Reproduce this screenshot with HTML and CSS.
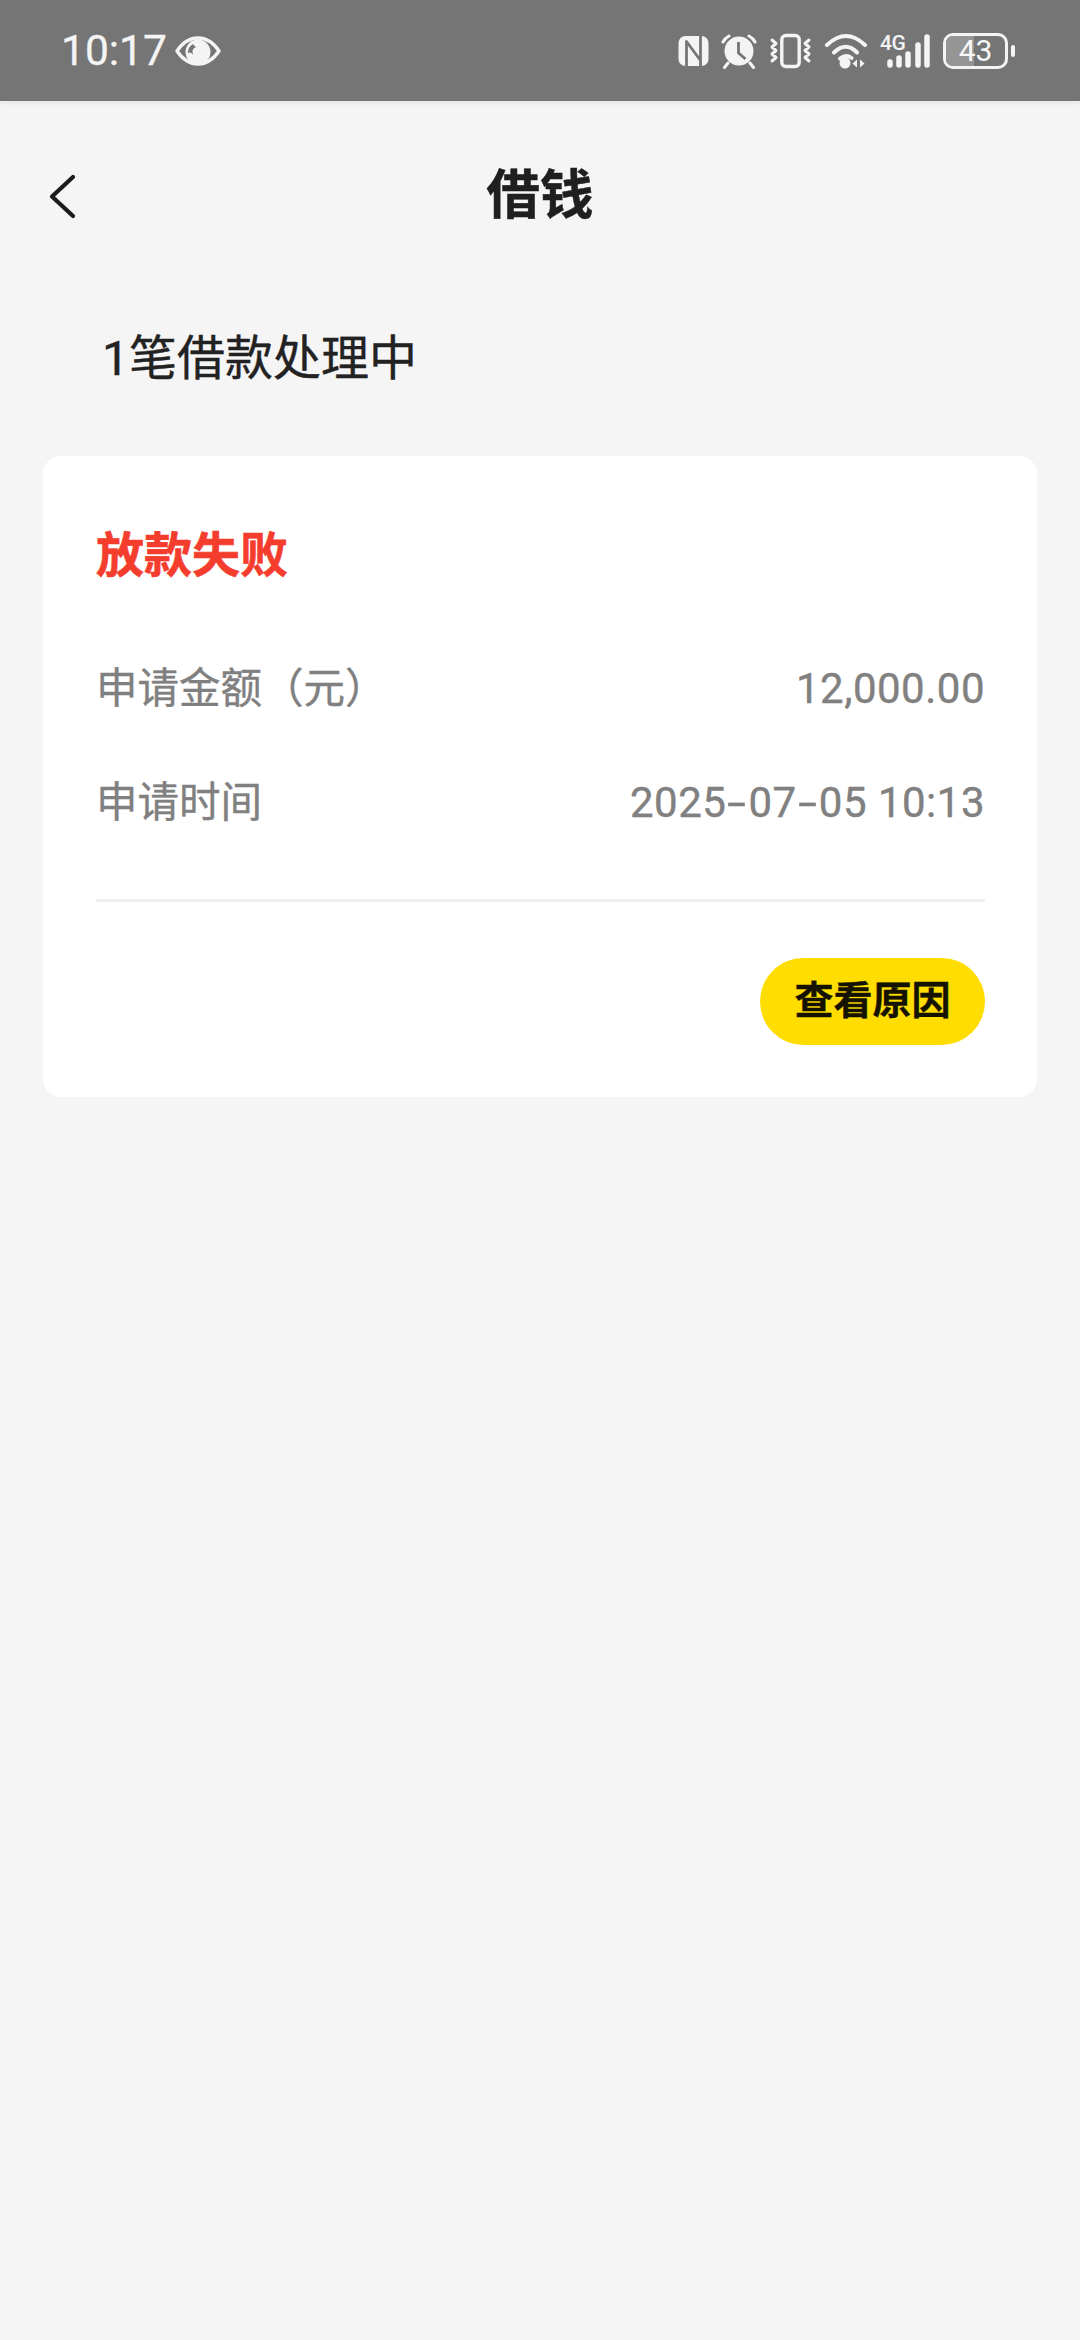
FILE: index.html
```html
<!DOCTYPE html>
<html lang="zh-CN">
<head>
<meta charset="utf-8">
<title>借钱</title>
<link rel="stylesheet" href="styles.css">
</head>
<body>
<div class="status">
  <div class="status-left">
    <span class="time">10:17</span>
    <svg class="eye" viewBox="0 0 46 32" width="46" height="32"><path d="M2 16C8 7 15 3 23 3s15 4 21 13c-6 9-13 13-21 13S8 25 2 16z" fill="none" stroke="#f4f4f4" stroke-width="3.4" stroke-linejoin="round"/><circle cx="23" cy="17" r="12.5" fill="#f4f4f4"/><path d="M18 9a10 10 0 0 0-5 9q3-1.5 5 2q-2-6 3-8q-2-1-3-3z" fill="#757575"/></svg>
  </div>
  <div class="status-right">
    <svg class="ic-nfc" viewBox="0 0 31 32" width="31" height="32"><rect x="0.5" y="1" width="30" height="30" rx="7" fill="#f4f4f4"/><path d="M8.500 31V6.500L22.500 25.500V31M22.500 1V25M8.500 7v19" fill="none" stroke="#757575" stroke-width="2.800" stroke-linejoin="round"/></svg>
    <svg class="ic-alarm" viewBox="0 0 36 36" width="36" height="36"><circle cx="18" cy="18" r="14.5" fill="#f4f4f4"/><path d="M17.5 9v11l7 6" fill="none" stroke="#757575" stroke-width="2.8" stroke-linejoin="round"/><path d="M2 9q2-4 6-6M34 9q-2-4-6-6M7 30l-3.500 4.500M29 30l3.500 4.500" fill="none" stroke="#f4f4f4" stroke-width="3" stroke-linecap="round"/></svg>
    <svg class="ic-vibrate" viewBox="0 0 43 36" width="43" height="36"><rect x="12.800" y="2.500" width="17.400" height="31" rx="4" fill="none" stroke="#f4f4f4" stroke-width="3.4"/><path d="M3 7l4 3.500-4 3.500 4 3.500-4 3.500 4 3.500-4 3.500M40 7l-4 3.500 4 3.500-4 3.500 4 3.500-4 3.500 4 3.500" fill="none" stroke="#f4f4f4" stroke-width="3" stroke-linejoin="round" stroke-linecap="round"/></svg>
    <svg class="ic-wifi" viewBox="0 0 44 36" width="44" height="36"><path d="M3 12Q22-6 41 12M10 19.500Q22 8 33 19.500M16 25.500Q22 21 27.500 25" fill="none" stroke="#f4f4f4" stroke-width="4" stroke-linecap="round"/><circle cx="21" cy="30" r="5.500" fill="#f4f4f4"/><path d="M33 26.500v8l-4.500-4zM36 26.500v8l4.500-4z" fill="#f4f4f4"/></svg>
    <div class="signal">
      <span class="net">4G</span>
      <svg viewBox="0 0 50 36" width="50" height="36"><path d="M10 29v3M19 25v7M28 21v11M38 12v20M47 4v28" stroke="#f4f4f4" stroke-width="5.500" stroke-linecap="round"/></svg>
    </div>
    <div class="battery">
      <div class="battery-body"><div class="battery-fill" style="width:47%"></div><span class="battery-num">43</span></div>
      <div class="battery-tip"></div>
    </div>
  </div>
</div>
<div class="page">
  <header class="nav">
    <svg class="back" viewBox="0 0 30 48" width="30" height="48"><path d="M26 4L5 23.500 26 43" fill="none" stroke="#1c1c1c" stroke-width="4.200" stroke-linecap="round" stroke-linejoin="round"/></svg>
    <h1 class="title">借钱</h1>
  </header>
  <h2 class="summary">1笔借款处理中</h2>
  <section class="card">
    <div class="state">放款失败</div>
    <div class="rows">
      <div class="row"><span class="label">申请金额（元）</span><span class="value">12,000.00</span></div>
      <div class="row"><span class="label">申请时间</span><span class="value">2025<span class="hy">-</span>07<span class="hy">-</span>05 10:13</span></div>
    </div>
    <div class="divider"></div>
    <div class="actions"><button class="btn">查看原因</button></div>
  </section>
</div>
</body>
</html>
```
FILE: styles.css
```css
* { box-sizing: border-box; margin: 0; padding: 0; }
html, body { width: 1080px; height: 2340px; overflow: hidden; }
body { background: #f5f5f5; font-family: Roboto, "Noto Sans CJK SC", sans-serif; color: #1f1f1f; }
.status { height: 101px; background: #757575; display: flex; justify-content: space-between; align-items: center; padding: 0 65px 0 61px; box-shadow: 0 2px 8px rgba(0,0,0,.08); }
.status-left { display: flex; align-items: center; gap: 8px; }
.time { font-size: 42.5px; line-height: 50px; color: #f4f4f4; -webkit-text-stroke: .3px #f4f4f4; }
.status-right { display: flex; align-items: center; gap: 12px; }
.status-right svg { display: block; }
.signal { position: relative; width: 50px; height: 36px; }
.net { position: absolute; left: 0; top: 0; font-size: 21px; line-height: 20px; font-weight: 500; letter-spacing: -.5px; color: #f4f4f4; }
.battery { display: flex; align-items: center; gap: 3px; margin-left: 1px; }
.battery-body { position: relative; width: 65px; height: 36px; border: 3px solid #f4f4f4; border-radius: 10px; overflow: hidden; display: flex; align-items: center; justify-content: center; }
.battery-fill { position: absolute; left: 0; top: 0; bottom: 0; background: #959595; }
.battery-num { position: relative; font-size: 30px; line-height: 30px; font-weight: 400; color: #f8f8f8; }
.battery-tip { width: 4px; height: 12px; background: #f4f4f4; border-radius: 2px; }
.page { padding: 0 43px; }
.nav { height: 186px; padding-top: 3px; display: flex; align-items: center; justify-content: center; position: relative; margin: 0 -43px; }
.back { position: absolute; left: 47px; top: 72px; }
.title { font-size: 53.5px; line-height: 60px; font-weight: 700; color: #1f1f1f; -webkit-text-stroke: .5px #1f1f1f; }
.summary { font-size: 48px; line-height: 60px; font-weight: 400; color: #222; -webkit-text-stroke: .4px #222; margin: 42px 0 67px 59px; }
.card { background: #fff; border-radius: 18px; height: 641px; padding: 70px 52px 0 53px; }
.state { font-size: 48px; line-height: 60px; font-weight: 700; color: #f53d2e; -webkit-text-stroke: .6px #f53d2e; }
.rows { display: flex; flex-direction: column; gap: 54px; margin-top: 73px; }
.row { display: flex; justify-content: space-between; align-items: baseline; height: 60px; line-height: 60px; color: #808080; font-size: 41px; -webkit-text-stroke: .4px #808080; }
.label { font-size: 41.5px; }
.value { font-size: 42px; letter-spacing: .5px; }
.hy { display: inline-block; transform: scaleX(1.6); margin: 0 5px; }
.divider { height: 3px; background: #f0f0f0; margin-top: 66px; }
.actions { display: flex; justify-content: flex-end; margin-top: 56px; }
.btn { width: 225px; height: 87px; border: 0; border-radius: 44px; background: #ffdd00; color: #151200; font: 700 39px/87px Roboto, "Noto Sans CJK SC", sans-serif; -webkit-text-stroke: .4px #151200; }
```
